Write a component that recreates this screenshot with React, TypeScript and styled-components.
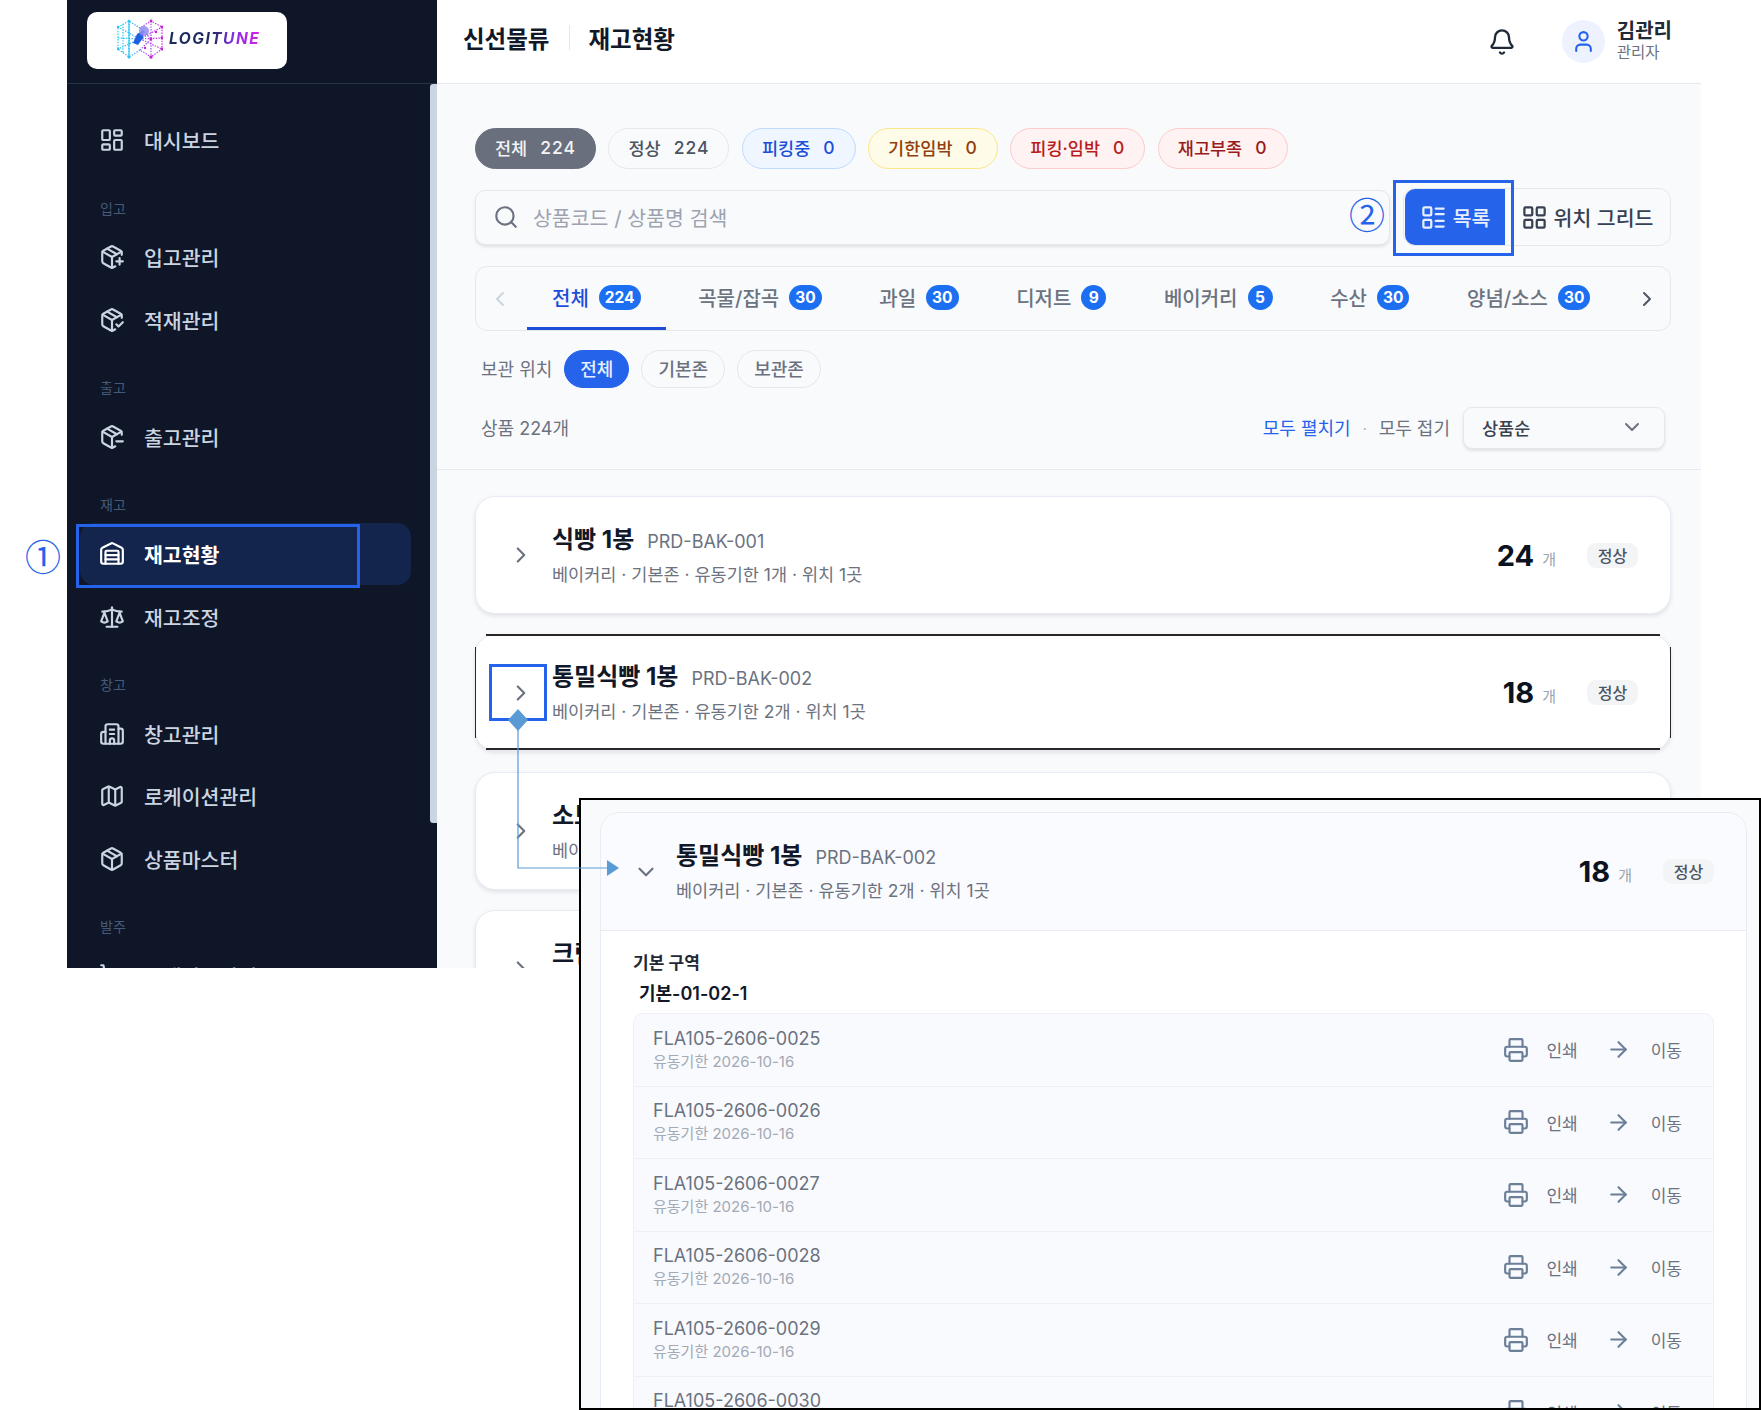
import React from "react";
import styled, { createGlobalStyle, css } from "styled-components";
import {
  ArrowRight,
  Bell,
  Building2,
  ChevronDown,
  ChevronLeft,
  ChevronRight,
  LayoutDashboard,
  LayoutGrid,
  LayoutList,
  Map as MapIcon,
  Package,
  PackageCheck,
  PackageMinus,
  PackagePlus,
  Printer,
  Scale,
  Search,
  ShoppingCart,
  User,
  Warehouse,
} from "lucide-react";

const GlobalStyle = createGlobalStyle`
  html, body {
    margin: 0;
    padding: 0;
    background: #ffffff;
  }
  * {
    box-sizing: border-box;
  }
  body {
    font-family: Inter, "Noto Sans CJK KR", "Noto Sans", sans-serif;
  }
`;

const Page = styled.div`
  position: relative;
  width: 1761px;
  height: 1410px;
  overflow: hidden;
  background: #ffffff;
`;

const Shot = styled.div`
  display: flex;
  width: 1634px;
  height: 968px;
  margin-left: 67px;
  overflow: hidden;
`;

/* sidebar */
const Sidebar = styled.aside`
  position: relative;
  flex: 0 0 370px;
  background: #0e1628;
`;

const Brand = styled.div`
  height: 84px;
  padding: 12px 20px;
  border-bottom: 1px solid #263247;
`;

const LogoCard = styled.div`
  display: flex;
  align-items: center;
  gap: 6px;
  width: 200px;
  height: 57px;
  padding: 0 0 4px 30px;
  background: #ffffff;
  border-radius: 10px;
`;

const LogoWord = styled.span`
  font-size: 15.5px;
  font-weight: 700;
  font-style: italic;
  letter-spacing: 1.5px;
  background: linear-gradient(90deg, #1e2a5e 0%, #1e2a5e 48%, #7c2fe0 68%, #d81fe8 100%);
  -webkit-background-clip: text;
  background-clip: text;
  color: transparent;
`;

const Nav = styled.nav`
  display: flex;
  flex-direction: column;
  padding: 25px 0 0 13px;
`;

const NavLabel = styled.div`
  height: 18px;
  margin: 28px 0 8.6px 20px;
  font-size: 14px;
  line-height: 18px;
  color: #465a7a;
`;

const NavItem = styled.div<{ $active?: boolean }>`
  display: flex;
  flex: 0 0 62.5px;
  align-items: center;
  gap: 19px;
  width: 331px;
  padding-left: 19px;
  border-radius: 14px;
  font-size: 20.5px;
  font-weight: 500;
  color: #cbd5e1;
  ${(p) =>
    p.$active &&
    css`
      background: #13244d;
      color: #ffffff;
      font-weight: 700;
    `}
`;

const NavScroll = styled.div`
  position: absolute;
  top: 84px;
  right: 0;
  width: 7px;
  height: 739px;
  border-radius: 3px 0 0 3px;
  background: #cbd5e1;
`;

/* main */
const Main = styled.main`
  flex: 1;
  min-width: 0;
  background: #f9fafc;
`;

const TopBar = styled.header`
  display: flex;
  align-items: center;
  height: 84px;
  padding: 0 29px 8px 26px;
  background: #ffffff;
  border-bottom: 1px solid #e5e9f0;
`;

const Crumb = styled.span`
  font-size: 23.5px;
  font-weight: 600;
  color: #111827;
`;

const CrumbDivider = styled.span`
  width: 1px;
  height: 25px;
  margin: 0 18px 0 20px;
  background: #e5e7eb;
`;

const TopRight = styled.div`
  display: flex;
  align-items: center;
  margin-left: auto;
  padding-top: 8px;
`;

const Avatar = styled.div`
  display: flex;
  align-items: center;
  justify-content: center;
  width: 43px;
  height: 43px;
  margin: 0 12px 0 46px;
  border-radius: 50%;
  background: #eef2ff;
  color: #2563eb;
`;

const UserName = styled.div`
  font-size: 20px;
  line-height: 23px;
  font-weight: 600;
  color: #1f2937;
`;

const UserRole = styled.div`
  font-size: 15.5px;
  line-height: 20px;
  color: #6b7280;
`;

const Controls = styled.section`
  display: flex;
  flex-direction: column;
  padding: 44px 30px 20px 38px;
  border-bottom: 1px solid #e5e9f0;
`;

const ChipRow = styled.div`
  display: flex;
  gap: 12.5px;
  margin-bottom: 19px;
`;

const chipTones = {
  dark: "background:#696f7d;border-color:#696f7d;color:#f3f4f6;",
  plain: "background:#f9fafb;border-color:#e5e7eb;color:#4b5563;",
  blue: "background:#eff6ff;border-color:#bfdbfe;color:#1d4ed8;",
  amber: "background:#fefce8;border-color:#fde68a;color:#92400e;",
  rose: "background:#fef2f2;border-color:#fecaca;color:#b91c1c;",
  red: "background:#fef2f2;border-color:#fecaca;color:#991b1b;",
};

type ChipTone = keyof typeof chipTones;

const Chip = styled.div<{ $tone: ChipTone }>`
  display: flex;
  align-items: center;
  gap: 13px;
  height: 41px;
  padding: 0 19px 2px;
  border: 1.5px solid;
  border-radius: 21px;
  font-size: 17.5px;
  font-weight: 500;
  ${(p) => chipTones[p.$tone]}
`;

const ChipCount = styled.span`
  letter-spacing: 1px;
`;

const SearchRow = styled.div`
  display: flex;
  align-items: center;
  gap: 13px;
  margin-bottom: 20px;
`;

const SearchBox = styled.label`
  display: flex;
  flex: 1;
  align-items: center;
  gap: 14px;
  height: 55px;
  padding-left: 17px;
  border: 1px solid #e5e7eb;
  border-radius: 10px;
  background: #f9fafc;
  box-shadow: 0 2px 3px rgba(15, 23, 42, 0.1);
  color: #6b7280;
`;

const SearchInput = styled.input`
  flex: 1;
  border: 0;
  outline: 0;
  padding: 2px 0 0;
  background: transparent;
  font-family: inherit;
  font-size: 20.5px;
  &::placeholder {
    color: #9ca3af;
    opacity: 1;
  }
`;

const Segmented = styled.div`
  display: flex;
  align-items: center;
  width: 268px;
  height: 58px;
  padding: 0 1px;
  border: 1px solid #e5e7eb;
  border-radius: 12px;
  background: #f9fafc;
`;

const SegButton = styled.div<{ $on?: boolean }>`
  display: flex;
  align-items: center;
  justify-content: center;
  gap: 6px;
  height: 56px;
  font-size: 20.5px;
  font-weight: 500;
  color: #374151;
  flex: 1;
  ${(p) =>
    p.$on &&
    css`
      flex: 0 0 100px;
      border-radius: 10px 0 0 10px;
      background: #2563eb;
      color: #e8eeff;
    `}
`;

const TabBox = styled.div`
  display: flex;
  align-items: stretch;
  height: 65px;
  margin-bottom: 19px;
  border: 1px solid #e5e7eb;
  border-radius: 12px;
`;

const TabArrow = styled.div<{ $muted?: boolean }>`
  display: flex;
  align-items: center;
  justify-content: center;
  flex: 0 0 ${(p) => (p.$muted ? "51px" : "46px")};
  padding-right: ${(p) => (p.$muted ? "4px" : "0")};
  color: ${(p) => (p.$muted ? "#cbd5e1" : "#4b5563")};
`;

const TabStrip = styled.div`
  display: flex;
  flex: 1;
  gap: 7.6px;
  overflow: hidden;
`;

const Tab = styled.div<{ $on?: boolean }>`
  display: flex;
  align-items: center;
  gap: 10px;
  padding: 0 25px;
  border-bottom: 3px solid ${(p) => (p.$on ? "#1d4ed8" : "transparent")};
  font-size: 20px;
  font-weight: 500;
  white-space: nowrap;
  color: ${(p) => (p.$on ? "#1d4ed8" : "#6b7280")};
`;

const TabCount = styled.span`
  display: flex;
  align-items: center;
  justify-content: center;
  min-width: 25px;
  height: 25px;
  padding: 0 6px;
  border-radius: 13px;
  background: #1d6ff2;
  font-size: 15.5px;
  font-weight: 700;
  color: #ffffff;
`;

const FilterRow = styled.div`
  display: flex;
  align-items: center;
  gap: 12px;
  height: 38px;
  margin-bottom: 19px;
  padding-left: 6px;
`;

const Muted = styled.span`
  padding-bottom: 2px;
  font-size: 18px;
  color: #6b7280;
`;

const ZonePill = styled.div<{ $on?: boolean }>`
  display: flex;
  align-items: center;
  height: 38px;
  padding: 0 ${(p) => (p.$on ? "15px" : "16px")} 2px;
  border: 1.5px solid ${(p) => (p.$on ? "#2563eb" : "#e5e7eb")};
  border-radius: 19px;
  background: ${(p) => (p.$on ? "#2563eb" : "transparent")};
  font-size: 18px;
  font-weight: 500;
  color: ${(p) => (p.$on ? "#e8eeff" : "#6b7280")};
`;

const SummaryRow = styled.div`
  display: flex;
  align-items: center;
  height: 42px;
  padding: 0 6px;
`;

const LinkText = styled.span`
  margin-left: auto;
  padding-bottom: 2px;
  font-size: 18px;
  color: #2563eb;
`;

const Dot = styled.span`
  margin: 0 12px;
  font-size: 14px;
  color: #9ca3af;
`;

const SortBox = styled.div`
  display: flex;
  align-items: center;
  justify-content: space-between;
  width: 202px;
  height: 42px;
  margin-left: 13px;
  padding: 0 20px 2px 18px;
  border: 1px solid #e5e7eb;
  border-radius: 9px;
  background: #f9fafc;
  box-shadow: 0 2px 3px rgba(15, 23, 42, 0.1);
  font-size: 17.5px;
  font-weight: 500;
  color: #374151;
`;

const CardList = styled.section`
  display: flex;
  flex-direction: column;
  gap: 20px;
  padding: 26px 30px 0 38px;
`;

const Card = styled.article<{ $marked?: boolean }>`
  position: relative;
  flex: 0 0 118px;
  border: 1px solid #e8ebf3;
  border-radius: 20px;
  background: #ffffff;
  box-shadow: 0 2px 4px rgba(15, 23, 42, 0.1);
  ${(p) =>
    p.$marked &&
    css`
      flex-basis: 117px;
      margin-bottom: 1px;
      &::before {
        content: "";
        position: absolute;
        inset: -1px 10px 0;
        border-top: 2px solid #27272a;
        border-bottom: 2px solid #27272a;
      }
      &::after {
        content: "";
        position: absolute;
        inset: 12px -1px;
        border-left: 1.5px solid #27272a;
        border-right: 1.5px solid #27272a;
      }
    `}
`;

const CardHead = styled.div<{ $open?: boolean }>`
  display: flex;
  align-items: center;
  height: 100%;
  padding: 0 32px;
  color: #6b7280;
  ${(p) =>
    p.$open &&
    css`
      height: 118px;
      background: #fafbfe;
      border-bottom: 1px solid #e8ebf3;
      border-radius: 20px 20px 0 0;
    `}
`;

const CardInfo = styled.div<{ $open?: boolean }>`
  margin-left: ${(p) => (p.$open ? "17px" : "18px")};
  min-width: 0;
`;

const TitleLine = styled.div`
  display: flex;
  align-items: baseline;
  gap: 13px;
  margin-bottom: 7px;
`;

const ProductName = styled.span`
  font-size: 24px;
  line-height: 32px;
  font-weight: 700;
  color: #111827;
  white-space: nowrap;
`;

const ProductCode = styled.span`
  font-size: 18px;
  color: #6b7280;
`;

const ProductMeta = styled.div`
  font-size: 17.5px;
  line-height: 24px;
  color: #6b7280;
  white-space: nowrap;
`;

const Qty = styled.span`
  margin-left: auto;
  font-size: 29px;
  font-weight: 700;
  color: #0b1220;
`;

const QtyUnit = styled.span`
  margin: 6px 0 0 8px;
  font-size: 15px;
  color: #9ca3af;
`;

const StatusTag = styled.span`
  display: flex;
  align-items: center;
  justify-content: center;
  width: 51px;
  height: 25px;
  margin-left: 31px;
  padding-bottom: 1px;
  border-radius: 9px;
  background: #f3f4f6;
  font-size: 16px;
  font-weight: 500;
  color: #4b5563;
`;

/* annotations laid over the shot */
const Mark = styled.div`
  position: absolute;
  border: 3px solid #2563eb;
`;

const NavMark = styled(Mark)`
  left: 76px;
  top: 524px;
  width: 284px;
  height: 64px;
`;

const ToggleMark = styled(Mark)`
  left: 1393px;
  top: 180px;
  width: 121px;
  height: 76px;
`;

const ChevronMark = styled(Mark)`
  left: 489px;
  top: 664px;
  width: 58px;
  height: 57px;
`;

const Step = styled.span`
  position: absolute;
  font-family: "Noto Sans CJK KR", sans-serif;
  font-size: 36px;
  line-height: 40px;
  color: #2563eb;
`;

const StepOne = styled(Step)`
  left: 25px;
  top: 535px;
`;

const StepTwo = styled(Step)`
  left: 1349px;
  top: 193px;
`;

const Connector = styled.svg`
  position: absolute;
  left: 500px;
  top: 700px;
  z-index: 3;
`;

const Inset = styled.div`
  position: absolute;
  left: 579px;
  top: 798px;
  width: 1182px;
  height: 612px;
  padding: 12px 12px 0 19px;
  overflow: hidden;
  z-index: 2;
  border: 2px solid #000000;
  background: #f9fafc;
`;

const OpenCard = styled.div`
  height: 640px;
  border: 1px solid #e8ebf3;
  border-radius: 20px 20px 0 0;
  background: #ffffff;
`;

const OpenBody = styled.div`
  padding: 20px 32px 0;
`;

const ZoneTitle = styled.div`
  font-size: 17px;
  line-height: 24px;
  font-weight: 600;
  color: #1f2937;
`;

const SlotTitle = styled.div`
  margin: 7px 0 7px 6px;
  font-size: 18px;
  line-height: 24px;
  font-weight: 600;
  color: #111827;
`;

const LotList = styled.div`
  border: 1px solid #eef0f6;
  border-radius: 10px 10px 0 0;
  background: #f9fafd;
`;

const LotRow = styled.div`
  display: flex;
  align-items: center;
  height: 72.5px;
  padding: 0 31px 0 19px;
  border-bottom: 1px solid #eef0f6;
  color: #6b7f99;
`;

const LotInfo = styled.div`
  margin: 0 auto 1px 0;
`;

const LotCode = styled.div`
  font-size: 18px;
  line-height: 24px;
  color: #6b7280;
`;

const LotDate = styled.div`
  margin-top: 1px;
  font-size: 15px;
  line-height: 20px;
  color: #a3a9b5;
`;

const LotAction = styled.span`
  font-size: 17px;
  color: #6b7280;
`;

const PrintAction = styled(LotAction)`
  margin: 0 28px 0 17px;
`;

const MoveAction = styled(LotAction)`
  margin-left: 20px;
`;

const LogoMark = () => (
  <svg width="46" height="40" viewBox="0 0 46 40" fill="none">
    <defs>
      <linearGradient id="logoHex" x1="0" y1="0" x2="1" y2="0">
        <stop offset="0" stopColor="#19d3f5" />
        <stop offset="0.45" stopColor="#4f9df5" />
        <stop offset="0.6" stopColor="#a24cf0" />
        <stop offset="1" stopColor="#d11fe8" />
      </linearGradient>
    </defs>
    <path
      d="M1 8 L12 2 L23 9 L34 2 L45 8 L45 30 L34 38 L23 31 L12 38 L1 30 Z M12 2 L12 38 M6 5 L6 34 M23 9 L34 20 L23 31 M34 2 L34 38 M1 19 L23 20 L45 19 M1 8 L23 20 L1 30 M23 20 L45 30 M23 20 L45 8"
      stroke="url(#logoHex)"
      strokeWidth="1.2"
      strokeDasharray="1.4 1.3"
    />
    <path d="M12 2 L12 38" stroke="#19c8f5" strokeWidth="1.1" />
    <g fill="#c026d3">
      <circle cx="34" cy="2" r="1.4" />
      <circle cx="45" cy="8" r="1.5" />
      <circle cx="45" cy="19" r="1.5" />
      <circle cx="45" cy="30" r="1.5" />
      <circle cx="34" cy="38" r="1.7" />
      <circle cx="34" cy="20" r="1.4" />
      <circle cx="28" cy="29" r="1.2" />
      <circle cx="39" cy="13" r="1.2" />
    </g>
    <g fill="#22c9f5">
      <circle cx="1" cy="8" r="1.3" />
      <circle cx="12" cy="2" r="1.3" />
      <circle cx="1" cy="30" r="1.3" />
      <circle cx="12" cy="38" r="1.5" />
    </g>
    <path d="M16 24 L20 15 L27 11 L26 19 L21 26 Z" fill="#2160e0" />
    <circle cx="27" cy="12" r="5" fill="#8f8cf0" opacity="0.85" />
  </svg>
);

const chips: { label: string; count: number; tone: ChipTone }[] = [
  { label: "전체", count: 224, tone: "dark" },
  { label: "정상", count: 224, tone: "plain" },
  { label: "피킹중", count: 0, tone: "blue" },
  { label: "기한임박", count: 0, tone: "amber" },
  { label: "피킹·임박", count: 0, tone: "rose" },
  { label: "재고부족", count: 0, tone: "red" },
];

const tabs = [
  { label: "전체", count: 224 },
  { label: "곡물/잡곡", count: 30 },
  { label: "과일", count: 30 },
  { label: "디저트", count: 9 },
  { label: "베이커리", count: 5 },
  { label: "수산", count: 30 },
  { label: "양념/소스", count: 30 },
];

const products = [
  { name: "식빵 1봉", code: "PRD-BAK-001", meta: "베이커리 · 기본존 · 유동기한 1개 · 위치 1곳", qty: 24 },
  { name: "통밀식빵 1봉", code: "PRD-BAK-002", meta: "베이커리 · 기본존 · 유동기한 2개 · 위치 1곳", qty: 18, marked: true },
  { name: "소보로빵 1봉", code: "PRD-BAK-003", meta: "베이커리 · 기본존 · 유동기한 1개 · 위치 1곳", qty: 20 },
  { name: "크림빵 1봉", code: "PRD-BAK-004", meta: "베이커리 · 기본존 · 유동기한 1개 · 위치 1곳", qty: 16 },
];

const lots = ["0025", "0026", "0027", "0028", "0029", "0030"];

const icon = { size: 26, strokeWidth: 2 };

const App = () => {
  return (
    <Page>
      <GlobalStyle />
      <Shot>
        <Sidebar>
          <Brand>
            <LogoCard>
              <LogoMark />
              <LogoWord>LOGITUNE</LogoWord>
            </LogoCard>
          </Brand>
          <Nav>
            <NavItem><LayoutDashboard {...icon} />대시보드</NavItem>
            <NavLabel>입고</NavLabel>
            <NavItem><PackagePlus {...icon} />입고관리</NavItem>
            <NavItem><PackageCheck {...icon} />적재관리</NavItem>
            <NavLabel>출고</NavLabel>
            <NavItem><PackageMinus {...icon} />출고관리</NavItem>
            <NavLabel>재고</NavLabel>
            <NavItem $active><Warehouse {...icon} />재고현황</NavItem>
            <NavItem><Scale {...icon} />재고조정</NavItem>
            <NavLabel>창고</NavLabel>
            <NavItem><Building2 {...icon} />창고관리</NavItem>
            <NavItem><MapIcon {...icon} />로케이션관리</NavItem>
            <NavItem><Package {...icon} />상품마스터</NavItem>
            <NavLabel>발주</NavLabel>
            <NavItem><ShoppingCart {...icon} />구매발주관리</NavItem>
          </Nav>
          <NavScroll />
        </Sidebar>

        <Main>
          <TopBar>
            <Crumb>신선물류</Crumb>
            <CrumbDivider />
            <Crumb>재고현황</Crumb>
            <TopRight>
              <Bell size={28} strokeWidth={2} color="#1f2937" />
              <Avatar><User size={25} strokeWidth={2} /></Avatar>
              <div>
                <UserName>김관리</UserName>
                <UserRole>관리자</UserRole>
              </div>
            </TopRight>
          </TopBar>

          <Controls>
            <ChipRow>
              {chips.map((c) => (
                <Chip key={c.label} $tone={c.tone}>
                  <span>{c.label}</span>
                  <ChipCount>{c.count}</ChipCount>
                </Chip>
              ))}
            </ChipRow>

            <SearchRow>
              <SearchBox>
                <Search size={26} strokeWidth={2} />
                <SearchInput placeholder="상품코드 / 상품명 검색" />
              </SearchBox>
              <Segmented>
                <SegButton $on><LayoutList size={27} strokeWidth={2} />목록</SegButton>
                <SegButton><LayoutGrid size={27} strokeWidth={2} />위치 그리드</SegButton>
              </Segmented>
            </SearchRow>

            <TabBox>
              <TabArrow $muted><ChevronLeft size={24} strokeWidth={2} /></TabArrow>
              <TabStrip>
                {tabs.map((t, i) => (
                  <Tab key={t.label} $on={i === 0}>
                    {t.label}
                    <TabCount>{t.count}</TabCount>
                  </Tab>
                ))}
              </TabStrip>
              <TabArrow><ChevronRight size={24} strokeWidth={2} /></TabArrow>
            </TabBox>

            <FilterRow>
              <Muted>보관 위치</Muted>
              <ZonePill $on>전체</ZonePill>
              <ZonePill>기본존</ZonePill>
              <ZonePill>보관존</ZonePill>
            </FilterRow>

            <SummaryRow>
              <Muted>상품 224개</Muted>
              <LinkText>모두 펼치기</LinkText>
              <Dot>·</Dot>
              <Muted>모두 접기</Muted>
              <SortBox>
                상품순
                <ChevronDown size={24} strokeWidth={2} color="#6b7280" />
              </SortBox>
            </SummaryRow>
          </Controls>

          <CardList>
            {products.map((p) => (
              <Card key={p.code} $marked={p.marked}>
                <CardHead>
                  <ChevronRight size={26} strokeWidth={2} />
                  <CardInfo>
                    <TitleLine>
                      <ProductName>{p.name}</ProductName>
                      <ProductCode>{p.code}</ProductCode>
                    </TitleLine>
                    <ProductMeta>{p.meta}</ProductMeta>
                  </CardInfo>
                  <Qty>{p.qty}</Qty>
                  <QtyUnit>개</QtyUnit>
                  <StatusTag>정상</StatusTag>
                </CardHead>
              </Card>
            ))}
          </CardList>
        </Main>
      </Shot>

      <NavMark />
      <ToggleMark />
      <ChevronMark />
      <StepOne>①</StepOne>
      <StepTwo>②</StepTwo>

      <Inset>
        <OpenCard>
          <CardHead $open>
            <ChevronDown size={26} strokeWidth={2} />
            <CardInfo $open>
              <TitleLine>
                <ProductName>{products[1].name}</ProductName>
                <ProductCode>{products[1].code}</ProductCode>
              </TitleLine>
              <ProductMeta>{products[1].meta}</ProductMeta>
            </CardInfo>
            <Qty>{products[1].qty}</Qty>
            <QtyUnit>개</QtyUnit>
            <StatusTag>정상</StatusTag>
          </CardHead>
          <OpenBody>
            <ZoneTitle>기본 구역</ZoneTitle>
            <SlotTitle>기본-01-02-1</SlotTitle>
            <LotList>
              {lots.map((lot) => (
                <LotRow key={lot}>
                  <LotInfo>
                    <LotCode>FLA105-2606-{lot}</LotCode>
                    <LotDate>유동기한 2026-10-16</LotDate>
                  </LotInfo>
                  <Printer size={26} strokeWidth={2} />
                  <PrintAction>인쇄</PrintAction>
                  <ArrowRight size={25} strokeWidth={2} />
                  <MoveAction>이동</MoveAction>
                </LotRow>
              ))}
            </LotList>
          </OpenBody>
        </OpenCard>
      </Inset>

      <Connector width="130" height="185" viewBox="500 700 130 185" fill="none">
        <path d="M518 725 V868 H608" stroke="#5b9bd5" strokeWidth="1.2" />
        <path d="M518 709 L528 720 L518 731 L508 720 Z" fill="#5b9bd5" />
        <path d="M607 860 L619 868 L607 876 Z" fill="#5b9bd5" />
      </Connector>
    </Page>
  );
};

export default App;
